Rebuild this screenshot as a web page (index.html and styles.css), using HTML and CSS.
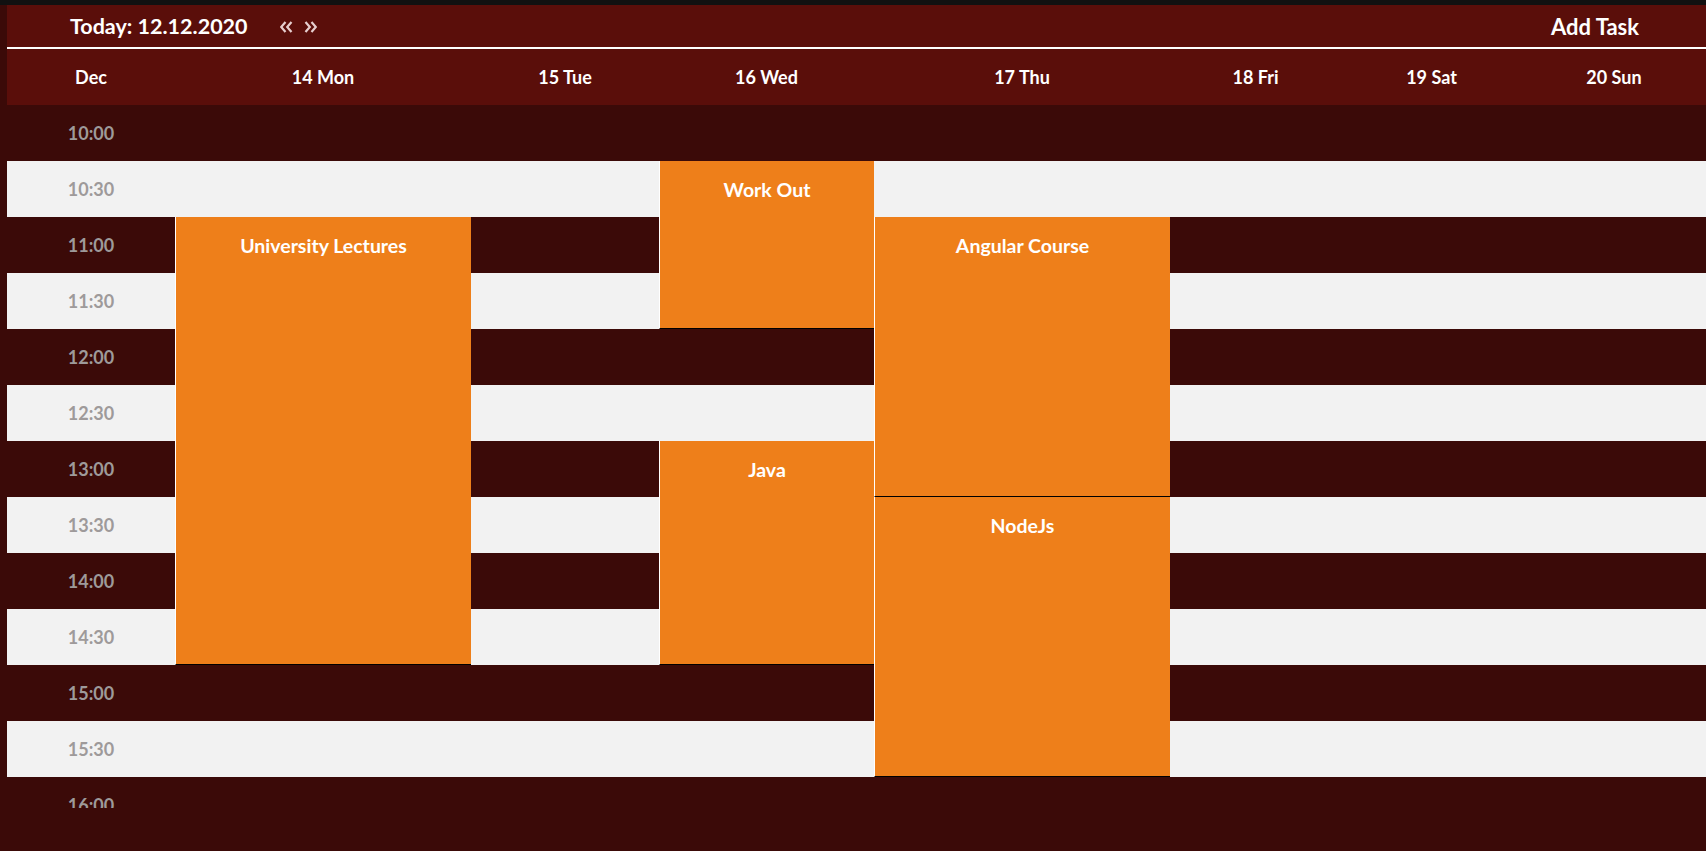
FILE: index.html
```html
<!DOCTYPE html>
<html lang="en">
<head>
<meta charset="utf-8">
<title>Calendar</title>
<link rel="stylesheet" href="styles.css">
</head>
<body>
<div class="topstrip"></div>
<div class="app">
  <header class="toolbar">
    <div class="today">
      <span class="today-label">Today: 12.12.2020</span>
      <svg class="nav" width="13" height="12" viewBox="0 0 13 12" aria-label="previous week"><polyline points="5.5,1 1.2,6 5.5,11" /><polyline points="11.5,1 7.2,6 11.5,11" /></svg>
      <svg class="nav" width="13" height="12" viewBox="0 0 13 12" aria-label="next week"><polyline points="1.5,1 5.8,6 1.5,11" /><polyline points="7.5,1 11.8,6 7.5,11" /></svg>
    </div>
    <div class="add-task">Add Task</div>
  </header>
  <div class="days">
    <div class="day">Dec</div>
    <div class="day">14 Mon</div>
    <div class="day">15 Tue</div>
    <div class="day">16 Wed</div>
    <div class="day">17 Thu</div>
    <div class="day">18 Fri</div>
    <div class="day">19 Sat</div>
    <div class="day">20 Sun</div>
  </div>
  <div class="scroller">
    <div class="grid">
      <div class="row dark r1"><span class="time">10:00</span></div>
      <div class="row light r2"><span class="time">10:30</span></div>
      <div class="row dark r3"><span class="time">11:00</span></div>
      <div class="row light r4"><span class="time">11:30</span></div>
      <div class="row dark r5"><span class="time">12:00</span></div>
      <div class="row light r6"><span class="time">12:30</span></div>
      <div class="row dark r7"><span class="time">13:00</span></div>
      <div class="row light r8"><span class="time">13:30</span></div>
      <div class="row dark r9"><span class="time">14:00</span></div>
      <div class="row light r10"><span class="time">14:30</span></div>
      <div class="row dark r11"><span class="time">15:00</span></div>
      <div class="row light r12"><span class="time">15:30</span></div>
      <div class="row dark r13"><span class="time">16:00</span></div>

      <div class="event ev-uni">University Lectures</div>
      <div class="event ev-workout">Work Out</div>
      <div class="event ev-java">Java</div>
      <div class="event ev-angular">Angular Course</div>
      <div class="event ev-node">NodeJs</div>
    </div>
  </div>
</div>
</body>
</html>
```
FILE: styles.css
```css
html, body {
  margin: 0;
  padding: 0;
  height: 100%;
  overflow: hidden;
}
body {
  background: #3b0a08;
  font-family: Lato, "Open Sans", "Liberation Sans", sans-serif;
  font-weight: 700;
  color: #fff;
}
.topstrip {
  height: 5px;
  background: #111;
}
.app {
  margin-left: 7px;
}
.toolbar {
  height: 42px;
  background: #5a0e0a;
  border-bottom: 2px solid #fff;
  display: flex;
  align-items: center;
  justify-content: space-between;
  padding: 0 67px 0 63px;
  font-size: 22px;
}
.today {
  display: flex;
  align-items: center;
}
.today-label {
  font-size: 21.5px;
  margin-right: 32px;
}
.nav {
  fill: none;
  stroke: #e6cece;
  stroke-width: 2.2;
  margin-right: 11px;
  margin-top: 2px;
}
.days {
  display: grid;
  grid-template-columns: 168px 296px 188px 215px 296px 171px 181px 1fr;
  height: 56px;
  background: #5a0e0a;
  font-size: 18px;
}
.day {
  text-align: center;
  line-height: 56px;
}
.scroller {
  height: 703px;
  overflow: hidden;
}
.grid {
  display: grid;
  grid-template-columns: 168px 296px 188px 215px 296px 171px 181px 1fr;
  grid-template-rows: repeat(13, 56px);
  font-size: 18px;
}
.row {
  grid-column: 1 / -1;
}
.row.dark { background: #3b0a08; }
.row.light { background: #f2f2f2; }
.r1 { grid-row: 1; }
.r2 { grid-row: 2; }
.r3 { grid-row: 3; }
.r4 { grid-row: 4; }
.r5 { grid-row: 5; }
.r6 { grid-row: 6; }
.r7 { grid-row: 7; }
.r8 { grid-row: 8; }
.r9 { grid-row: 9; }
.r10 { grid-row: 10; }
.r11 { grid-row: 11; }
.r12 { grid-row: 12; }
.r13 { grid-row: 13; }
.time {
  display: block;
  width: 168px;
  text-align: center;
  line-height: 56px;
  color: #9e9a9a;
}
.event {
  background: #ee7f1a;
  border-left: 1px solid #fff;
  border-bottom: 1px solid #000;
  box-sizing: border-box;
  text-align: center;
  padding-top: 17px;
  font-size: 19.5px;
  line-height: 1.2;
  z-index: 1;
}
.ev-uni { grid-column: 2; grid-row: 3 / 11; }
.ev-workout { grid-column: 4; grid-row: 2 / 5; }
.ev-java { grid-column: 4; grid-row: 7 / 11; }
.ev-angular { grid-column: 5; grid-row: 3 / 8; }
.ev-node { grid-column: 5; grid-row: 8 / 13; }
```
